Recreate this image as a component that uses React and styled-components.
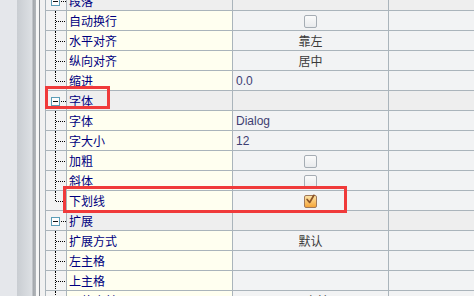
import React from 'react';
import styled, { createGlobalStyle, css } from 'styled-components';

const GlobalStyle = createGlobalStyle`
  html, body { margin: 0; padding: 0; background: #f2f3f4; overflow: hidden; }
  body { font-family: "Liberation Sans", "Noto Sans CJK SC", sans-serif; font-size: 12px; }
`;

const rows = [
  { type: 'group', name: '段落' },
  { type: 'leaf', name: '自动换行', check: false },
  { type: 'leaf', name: '水平对齐', center: '靠左' },
  { type: 'leaf', name: '纵向对齐', center: '居中' },
  { type: 'last', name: '缩进', left: '0.0' },
  { type: 'group', name: '字体', mark: 'group' },
  { type: 'leaf', name: '字体', left: 'Dialog' },
  { type: 'leaf', name: '字大小', left: '12' },
  { type: 'leaf', name: '加粗', check: false },
  { type: 'leaf', name: '斜体', check: false },
  { type: 'last', name: '下划线', check: true, mark: 'row' },
  { type: 'group', name: '扩展' },
  { type: 'leaf', name: '扩展方式', center: '默认' },
  { type: 'leaf', name: '左主格' },
  { type: 'leaf', name: '上主格' },
  { type: 'leaf', name: '同值合并', center: '不合并' },
];

const App = () => (
  <>
    <GlobalStyle />
    <Page>
      <Rail />
      <Table>
        {rows.map((r, i) => (
          <Row key={i}>
            <TreeCell kind={r.type}>
              {r.type === 'group' && <Toggle />}
            </TreeCell>
            <NameCell group={r.type === 'group'}>{r.name}</NameCell>
            <ValueCell group={r.type === 'group'} align={r.left ? 'left' : 'center'}>
              {r.check !== undefined && <CheckBox checked={r.check}>{r.check && <Tick />}</CheckBox>}
              {r.center}
              {r.left && <Latin>{r.left}</Latin>}
            </ValueCell>
            <ExtraCell group={r.type === 'group'} />
            {r.mark === 'group' && <Highlight style={{ left: 0, top: -5, width: 65, height: 23 }} />}
            {r.mark === 'row' && <Highlight style={{ left: 18, top: -5, width: 284, height: 27 }} />}
          </Row>
        ))}
      </Table>
    </Page>
  </>
);

export default App;

const Tick = () => (
  <svg width="13" height="13" viewBox="0 0 13 13">
    <path d="M2.5 6.5 L5.5 10 L10.5 1.5" fill="none" stroke="#8b5428" strokeWidth="2" strokeLinejoin="round" strokeLinecap="round" />
  </svg>
);

const Page = styled.div`
  display: flex;
  width: 474px;
  height: 296px;
  overflow: hidden;
`;

const Rail = styled.div`
  flex: 0 0 45px;
  background: linear-gradient(to right,
    #e5e7eb 0, #e5e7eb 17px,
    #c9cdd2 17px, #dde0e4 32px,
    #a3a7ac 33px, #b3b7bb 36px,
    #f7f7f7 36px, #f7f7f7 39px,
    #868b91 39px, #868b91 40px,
    #f1f1f1 40px, #f1f1f1 45px);
`;

const Table = styled.div`
  flex: 1;
  display: flex;
  flex-direction: column;
  margin-top: -9px;
`;

const Row = styled.div`
  position: relative;
  display: grid;
  grid-template-columns: 21px 166px 156px 1fr;
  height: 20px;
  flex: 0 0 20px;
  box-sizing: border-box;
  border-bottom: 1px solid #aab4bb;
`;

const cell = css`
  border-left: 1px solid #aab4bb;
  box-sizing: border-box;
  display: flex;
  align-items: center;
  overflow: hidden;
  white-space: nowrap;
`;

const TreeCell = styled.div`
  ${cell}
  position: relative;
  background: #f3f3f3;
  padding-left: 5px;
  &::before {
    content: '';
    position: absolute;
    left: 9px;
    top: 0;
    height: ${(p) => (p.kind === 'last' ? '10px' : p.kind === 'group' ? '0' : '20px')};
    border-left: 1px dotted #000;
  }
  &::after {
    content: '';
    position: absolute;
    left: ${(p) => (p.kind === 'group' ? '15px' : '10px')};
    top: 10px;
    width: ${(p) => (p.kind === 'group' ? '5px' : '9px')};
    border-top: 1px dotted #000;
  }
`;

const Toggle = styled.span`
  position: relative;
  width: 9px;
  height: 9px;
  box-sizing: border-box;
  border: 1px solid #5b9db7;
  background: #fdfdfd;
  margin-top: 1px;
  &::after {
    content: '';
    position: absolute;
    left: 1px;
    top: 3px;
    width: 5px;
    height: 1px;
    background: #111;
  }
`;

const NameCell = styled.div`
  ${cell}
  padding-left: 2px;
  background: ${(p) => (p.group ? '#eeeeee' : '#fffff0')};
  color: #00007e;
  font-family: "Noto Sans CJK SC", sans-serif;
  font-size: 12px;
`;

const ValueCell = styled.div`
  ${cell}
  justify-content: ${(p) => (p.align === 'left' ? 'flex-start' : 'center')};
  padding-left: ${(p) => (p.align === 'left' ? '3px' : '0')};
  background: ${(p) => (p.group ? '#eeeeee' : '#f2f3f4')};
  color: #3a3a3a;
  font-family: "Noto Sans CJK SC", sans-serif;
  font-size: 12px;
`;

const Latin = styled.span`
  font-family: "Liberation Sans", Arial, sans-serif;
  color: #3e3e72;
  font-size: 12px;
`;

const ExtraCell = styled.div`
  ${cell}
  background: ${(p) => (p.group ? '#eeeeee' : '#f2f3f4')};
`;

const CheckBox = styled.span`
  width: 13px;
  height: 13px;
  box-sizing: border-box;
  border-radius: 2px;
  margin-top: 1px;
  display: flex;
  align-items: center;
  justify-content: center;
  border: 1px solid ${(p) => (p.checked ? '#a0785a' : '#a6adb4')};
  background: ${(p) =>
    p.checked
      ? 'linear-gradient(to bottom, #fde3a6, #f5a63a)'
      : 'linear-gradient(to bottom, #fbfbfb, #e9ebed)'};
  svg { display: block; margin-top: -3px; }
`;

const Highlight = styled.div`
  position: absolute;
  box-sizing: border-box;
  border: 3px solid #f03a3a;
  pointer-events: none;
  z-index: 2;
`;
